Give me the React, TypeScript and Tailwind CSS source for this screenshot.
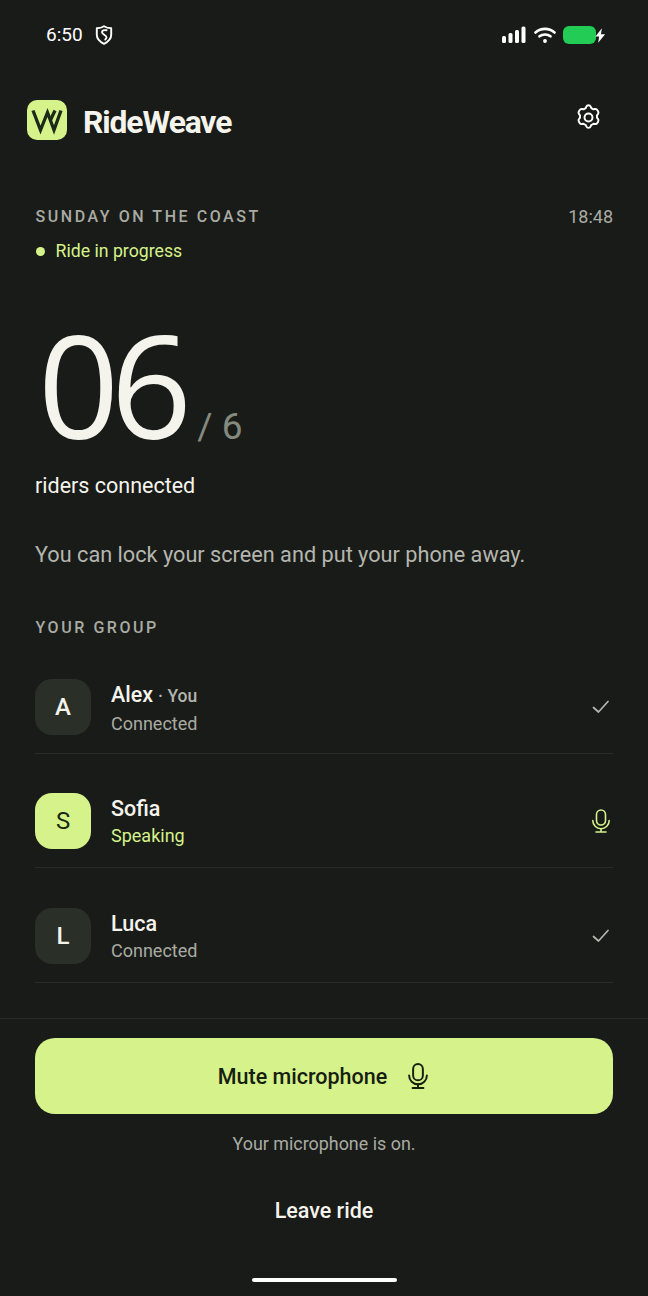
import React from "react";

function Mic({ className, sw = 1.6 }: { className: string; sw?: number }) {
  return (
    <svg viewBox="0 0 24 24" fill="none" stroke="currentColor" strokeWidth={sw} strokeLinecap="round" strokeLinejoin="round" className={className}>
      <rect x="7.500" y="1" width="9" height="15" rx="4.500" />
      <path d="M3.800 11.500a8.200 8.200 0 0 0 16.400 0" />
      <path d="M12 19.700v3.300M7 23h10" />
    </svg>
  );
}

function Check() {
  return (
    <svg viewBox="0 0 20 20" fill="none" stroke="#b4b6ae" strokeWidth="1.700" strokeLinecap="round" strokeLinejoin="round" className="w-5 h-5">
      <path d="M2.500 10.500 7.500 15 17 4.500" />
    </svg>
  );
}

function Row({ letter, name, you, status, speaking }: { letter: string; name: string; you?: boolean; status: string; speaking?: boolean }) {
  return (
    <div className="flex items-end h-[114.500px] pb-[18px] border-b border-[#272a26]">
      <div className={`w-14 h-14 rounded-[17px] flex items-center justify-center text-[24px] ${speaking ? "bg-[#d6f28a] text-[#1a2a10]" : "bg-[#2a2f28] text-[#f5f4ec] font-medium"}`}>{letter}</div>
      <div className="ml-5 flex-1 h-14 pt-[2px]">
        <div className="flex items-baseline leading-[27px]">
          <span className="text-[21.500px] font-medium text-[#f5f4ec]">{name}</span>
          {you && <span className="text-[17.500px] text-[#b4b6ae] ml-[5px] font-medium">· You</span>}
        </div>
        <div className={`text-[18px] leading-[28px] ${speaking ? "text-[#d6f28a]" : "text-[#a9aba3]"}`}>{status}</div>
      </div>
      <div className="w-6 h-14 flex items-center justify-center">
        {speaking ? <Mic className="w-6 h-6 text-[#d6f28a] shrink-0" /> : <Check />}
      </div>
    </div>
  );
}

export default function App() {
  return (
    <div className="w-[648px] h-[1296px] bg-[#191b19] flex flex-col overflow-hidden text-[#f5f4ec]" style={{ fontFamily: "Roboto, sans-serif" }}>
      {/* status bar */}
      <div className="h-[70px] flex items-center justify-between pl-[46px] pr-[42px] shrink-0">
        <div className="flex items-center gap-[12px]">
          <span className="text-[19px] text-white mt-[1px]">6:50</span>
          <svg viewBox="0 0 18 20" fill="none" stroke="white" strokeWidth="1.900" strokeLinejoin="round" strokeLinecap="round" className="w-[18px] h-5">
            <path d="M9 1.200c2.400 1.500 4.800 2 7.200 2.100v6.500c0 4-3 7-7.200 9-4.200-2-7.200-5-7.200-9V3.300C4.200 3.200 6.600 2.700 9 1.200Z" />
            <path d="M11.500 5.300C9 4.800 7 5.500 7 7.300c0 2.200 4.500 2.700 4.500 5 0 .8-.5 1.600-1.300 2.300" />
          </svg>
        </div>
        <div className="flex items-center">
          <svg viewBox="0 0 24 18" fill="white" className="w-6 h-[18px]">
            <rect x="0" y="10" width="4" height="7" rx="1.500" />
            <rect x="6.500" y="7" width="4" height="10" rx="1.500" />
            <rect x="13" y="4" width="4" height="13" rx="1.500" />
            <rect x="19.500" y="0.500" width="4" height="16.500" rx="1.500" />
          </svg>
          <svg viewBox="0 0 22 16" fill="none" stroke="white" strokeWidth="2.600" strokeLinecap="round" className="w-[22px] h-4 ml-[8px]">
            <path d="M1.500 5.500c5.500-4.800 13.500-4.800 19 0" />
            <path d="M5.500 9.300c3-2.500 8-2.500 11 0" />
            <circle cx="11" cy="14" r="1.300" fill="white" stroke="white" strokeWidth="1.200" />
          </svg>
          <div className="w-[33px] h-[18px] rounded-[6px] bg-[#22cc55] ml-[7px]" />
          <svg viewBox="0 0 12 16" fill="white" className="w-[11px] h-[15px] -ml-[1px]">
            <path d="M7.500 0 0.500 9h4L3.500 16 11 6.500H6.500Z" />
          </svg>
        </div>
      </div>

      {/* header */}
      <div className="flex items-center justify-between pl-[27px] pr-[45px] mt-[30px] h-10 shrink-0">
        <div className="flex items-center gap-[16px]">
          <div className="w-10 h-10 rounded-[10px] bg-[#d6f28a]">
            <svg viewBox="0 0 40 40" fill="none" stroke="#1c2a18" strokeWidth="3.300" strokeLinejoin="miter" strokeLinecap="butt" className="w-10 h-10">
              <path d="M6 10.500 13.500 30 20.500 12.500 27 30 34 10.500" />
              <path d="M23.500 20 28 10.500" />
            </svg>
          </div>
          <span className="text-[31.800px] font-bold tracking-[-0.035em] text-[#f5f4ec] mt-[6px]">RideWeave</span>
        </div>
        <svg viewBox="0 0 24 24" fill="none" stroke="white" strokeWidth="1.600" strokeLinecap="round" strokeLinejoin="round" className="w-[29px] h-[29px] -mt-[5px]">
          <path d="M12 1.800c.8 0 1.500.5 1.800 1.200l.5 1.200 1.800 1 1.300-.2c.8-.1 1.500.2 1.900.9l.7 1.200c.4.700.3 1.500-.2 2.100l-.8 1v2l.8 1c.5.600.6 1.400.2 2.100l-.7 1.200c-.4.700-1.100 1-1.900.9l-1.300-.2-1.800 1-.5 1.200c-.3.700-1 1.200-1.800 1.200s-1.500-.5-1.800-1.200l-.5-1.200-1.800-1-1.300.2c-.8.100-1.500-.2-1.900-.9l-.7-1.200c-.4-.7-.3-1.500.2-2.100l.8-1v-2l-.8-1c-.5-.6-.6-1.400-.2-2.100l.7-1.200c.4-.7 1.100-1 1.900-.9l1.300.2 1.800-1 .5-1.200c.3-.7 1-1.200 1.800-1.200Z" />
          <circle cx="12" cy="12" r="3.300" />
        </svg>
      </div>

      {/* main */}
      <div className="flex-1 px-[35px] min-h-0">
        <div className="flex items-start justify-between mt-[65px]">
          <span className="text-[16px] font-medium tracking-[0.16em] text-[#a9aba3] leading-[24px] ml-[0.500px]">SUNDAY ON THE COAST</span>
          <span className="text-[18px] text-[#a9aba3] leading-[24px]">18:48</span>
        </div>
        <div className="flex items-center mt-[10px] h-[24px] ml-[0.500px]">
          <span className="w-[9px] h-[9px] rounded-full bg-[#d6f28a]" />
          <span className="ml-[11px] text-[17.700px] text-[#d6f28a]">Ride in progress</span>
        </div>
        <div className="flex items-baseline mt-[49px] h-[144px]">
          <span className="text-[142px] leading-[144px] tracking-[-0.06em] text-[#f5f4ec] ml-[3px]" style={{ fontFamily: "'Open Sans', sans-serif" }}>06</span>
          <span className="text-[37px] text-[#858a7e] ml-[14px]">/ 6</span>
        </div>
        <div className="text-[21.500px] text-[#f5f4ec] mt-[15px] leading-[30px]">riders connected</div>
        <div className="text-[21.700px] text-[#b4b6ae] mt-[39px] leading-[30px]">You can lock your screen and put your phone away.</div>
        <div className="text-[16px] font-medium tracking-[0.16em] text-[#a9aba3] mt-[46px] leading-[24px] ml-[0.500px]">YOUR GROUP</div>
        <div className="-mt-[0.600px]">
          <Row letter="A" name="Alex" you status="Connected" />
          <Row letter="S" name="Sofia" status="Speaking" speaking />
          <Row letter="L" name="Luca" status="Connected" />
        </div>
      </div>

      {/* footer */}
      <div className="border-t border-[#272a26] shrink-0 h-[278px] px-[35px] flex flex-col items-stretch">
        <div className="mt-[19px] h-[76px] rounded-[20px] bg-[#d6f28a] flex items-center justify-center gap-[18px]">
          <span className="text-[21.500px] font-medium text-[#16200f] mt-[2px] ml-[1px]">Mute microphone</span>
          <Mic className="w-[26px] h-[26px] text-[#16200f]" sw={1.800} />
        </div>
        <div className="text-center text-[17.900px] text-[#a9aba3] mt-[17px] leading-[26px]">Your microphone is on.</div>
        <div className="text-center text-[21.500px] font-medium text-[#f5f4ec] mt-[39px] leading-[30px]">Leave ride</div>
        <div className="mt-[52px] self-center w-[145px] h-[4px] rounded-full bg-white" />
      </div>
    </div>
  );
}
